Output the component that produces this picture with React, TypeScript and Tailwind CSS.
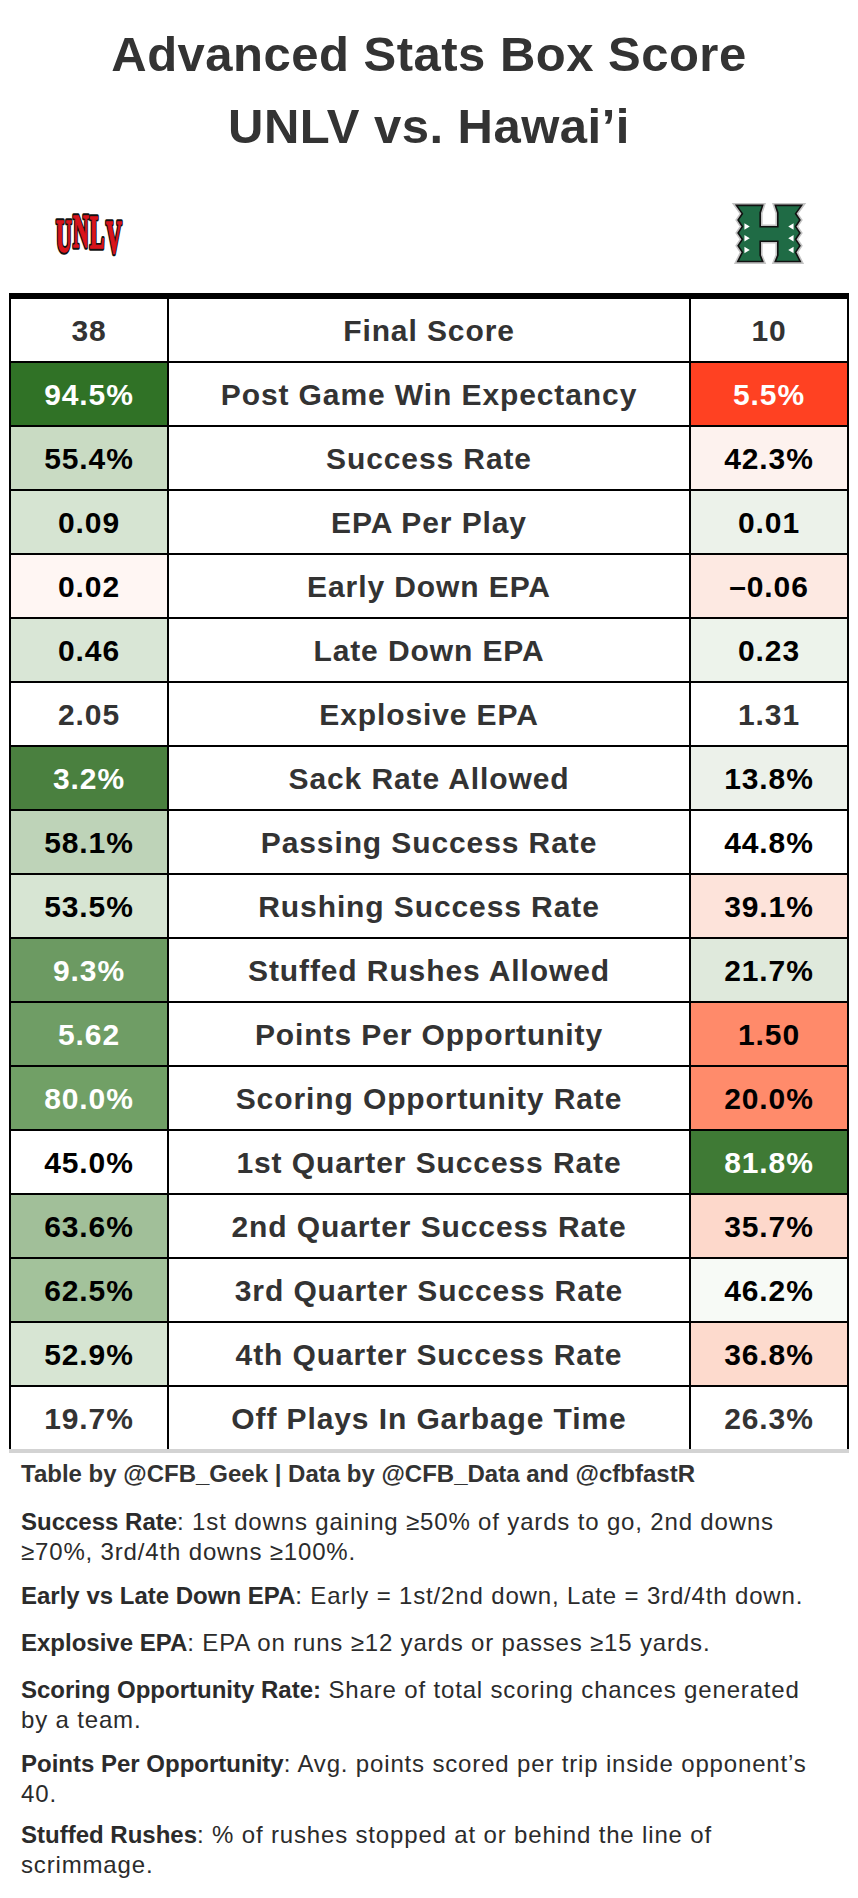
import React from 'react';

type Row = {
  left: string;
  label: string;
  right: string;
  lc: string;
  rc: string;
};

const rows: Row[] = [
  { left: '38', label: 'Final Score', right: '10', lc: 'bg-white text-[#333]', rc: 'bg-white text-[#333]' },
  { left: '94.5%', label: 'Post Game Win Expectancy', right: '5.5%', lc: 'bg-[#307226] text-white', rc: 'bg-[#ff4122] text-white' },
  { left: '55.4%', label: 'Success Rate', right: '42.3%', lc: 'bg-[#c9dbc3] text-black', rc: 'bg-[#fdf2ee] text-black' },
  { left: '0.09', label: 'EPA Per Play', right: '0.01', lc: 'bg-[#d6e4d2] text-black', rc: 'bg-[#ecf2ea] text-black' },
  { left: '0.02', label: 'Early Down EPA', right: '–0.06', lc: 'bg-[#fff6f3] text-black', rc: 'bg-[#fde9e2] text-black' },
  { left: '0.46', label: 'Late Down EPA', right: '0.23', lc: 'bg-[#d9e6d6] text-black', rc: 'bg-[#edf3eb] text-black' },
  { left: '2.05', label: 'Explosive EPA', right: '1.31', lc: 'bg-white text-[#333]', rc: 'bg-white text-[#333]' },
  { left: '3.2%', label: 'Sack Rate Allowed', right: '13.8%', lc: 'bg-[#4a803f] text-white', rc: 'bg-[#ecf1ea] text-black' },
  { left: '58.1%', label: 'Passing Success Rate', right: '44.8%', lc: 'bg-[#bed3b8] text-black', rc: 'bg-white text-black' },
  { left: '53.5%', label: 'Rushing Success Rate', right: '39.1%', lc: 'bg-[#d7e5d3] text-black', rc: 'bg-[#fde3da] text-black' },
  { left: '9.3%', label: 'Stuffed Rushes Allowed', right: '21.7%', lc: 'bg-[#6c9a62] text-white', rc: 'bg-[#dfe9dc] text-black' },
  { left: '5.62', label: 'Points Per Opportunity', right: '1.50', lc: 'bg-[#6f9d65] text-white', rc: 'bg-[#ff8a6a] text-black' },
  { left: '80.0%', label: 'Scoring Opportunity Rate', right: '20.0%', lc: 'bg-[#71a066] text-white', rc: 'bg-[#ff8b6b] text-black' },
  { left: '45.0%', label: '1st Quarter Success Rate', right: '81.8%', lc: 'bg-white text-black', rc: 'bg-[#3f7a35] text-white' },
  { left: '63.6%', label: '2nd Quarter Success Rate', right: '35.7%', lc: 'bg-[#a1bf99] text-black', rc: 'bg-[#fdd8cb] text-black' },
  { left: '62.5%', label: '3rd Quarter Success Rate', right: '46.2%', lc: 'bg-[#a3c29b] text-black', rc: 'bg-[#f7faf6] text-black' },
  { left: '52.9%', label: '4th Quarter Success Rate', right: '36.8%', lc: 'bg-[#d7e5d3] text-black', rc: 'bg-[#fddacd] text-black' },
  { left: '19.7%', label: 'Off Plays In Garbage Time', right: '26.3%', lc: 'bg-white text-[#333]', rc: 'bg-white text-[#333]' },
];

const unlvLetters = [
  { ch: 'U', x: 10, y: 40 },
  { ch: 'N', x: 27, y: 35 },
  { ch: 'L', x: 43, y: 36 },
  { ch: 'V', x: 60, y: 41 },
];

// arched red block letters, black outline
function UnlvLogo() {
  return (
    <svg width="72" height="44" viewBox="0 0 70 44" overflow="visible">
      {unlvLetters.map((l) => (
        <text
          key={'o' + l.ch}
          textAnchor="middle"
          fontFamily="'Liberation Serif', serif"
          fontWeight="bold"
          fontSize="26"
          fill="#111"
          stroke="#111"
          strokeWidth="3"
          strokeLinejoin="round"
          transform={`translate(${l.x} ${l.y}) scale(0.84 1.8)`}
        >
          {l.ch}
        </text>
      ))}
      {unlvLetters.map((l) => (
        <text
          key={'f' + l.ch}
          textAnchor="middle"
          fontFamily="'Liberation Serif', serif"
          fontWeight="bold"
          fontSize="26"
          fill="#d9141c"
          stroke="#d9141c"
          strokeWidth="0.8"
          transform={`translate(${l.x} ${l.y}) scale(0.84 1.8)`}
        >
          {l.ch}
        </text>
      ))}
    </svg>
  );
}

function HawaiiLogo() {
  const d =
    'M9 4 L31 4 L29 10 L29 24 L47 24 L47 10 L45 4 L67 4 L62 11 L66 17 L62 23 L66 29 L62 35 L66 41 L62 47 L66 55 L45 55 L47 50 L47 36 L29 36 L29 50 L31 55 L10 55 L14 47 L10 41 L14 35 L10 29 L14 23 L10 17 L14 11 Z';
  return (
    <svg width="76" height="62" viewBox="4 1 68 58">
      <path d={d} fill="#b9b9b9" stroke="#c4c4c4" strokeWidth="6" strokeLinejoin="miter" />
      <path d={d} fill="#111" stroke="#111" strokeWidth="3" strokeLinejoin="miter" />
      <path d={d} fill="#1f6b45" />
      <path d="M15 20 L20 23 L15 26 Z M15 31 L20 34 L15 37 Z M15 42 L20 45 L15 48 Z" fill="#fff" />
      <path d="M61 20 L56 23 L61 26 Z M61 31 L56 34 L61 37 Z M61 42 L56 45 L61 48 Z" fill="#fff" />
    </svg>
  );
}

export default function App() {
  return (
    <div className="w-[858px] bg-white font-['Liberation_Sans',Arial,sans-serif] text-[#333]">
      <div className="pt-[18px] text-center text-[49px] font-bold leading-[72px] tracking-[0.01em]">
        <div>Advanced Stats Box Score</div>
        <div>UNLV vs. Hawai’i</div>
      </div>

      <div className="flex h-[131px] items-center justify-between pl-[53px] pr-[51px] pt-[12px]">
        <UnlvLogo />
        <HawaiiLogo />
      </div>

      <div className="mx-[9px] border-t-[6px] border-black">
        {rows.map((row, i) => {
          const last = i === rows.length - 1;
          return (
            <div
              key={row.label}
              className={
                last
                  ? 'flex h-[66px] border-b-4 border-[#d3d3d3]'
                  : 'flex h-[64px] border-b-2 border-black'
              }
            >
              <div className={`flex w-[158px] items-center justify-center border-l-2 border-black text-[30px] font-bold tracking-[0.03em] ${row.lc}`}>
                {row.left}
              </div>
              <div className="flex w-[522px] items-center justify-center border-l-2 border-black bg-white text-[30px] font-bold tracking-[0.03em] text-[#333]">
                {row.label}
              </div>
              <div className={`flex w-[160px] items-center justify-center border-x-2 border-black text-[30px] font-bold tracking-[0.03em] ${row.rc}`}>
                {row.right}
              </div>
            </div>
          );
        })}
      </div>

      <div className="px-[21px] pb-[24px] text-[24px] leading-[30px] tracking-[0.035em] text-[#2b2b2b]">
        <p className="mt-[6px] whitespace-nowrap font-bold tracking-normal text-[#333]">
          Table by @CFB_Geek | Data by @CFB_Data and @cfbfastR
        </p>
        <p className="mt-[18px] whitespace-nowrap">
          <span className="font-bold tracking-normal">Success Rate</span>: 1st downs gaining ≥50% of yards to go, 2nd downs
          <br />
          ≥70%, 3rd/4th downs ≥100%.
        </p>
        <p className="mt-[14px] whitespace-nowrap">
          <span className="font-bold tracking-normal">Early vs Late Down EPA</span>: Early = 1st/2nd down, Late = 3rd/4th down.
        </p>
        <p className="mt-[17px] whitespace-nowrap">
          <span className="font-bold tracking-normal">Explosive EPA</span>: EPA on runs ≥12 yards or passes ≥15 yards.
        </p>
        <p className="mt-[17px] whitespace-nowrap">
          <span className="font-bold tracking-normal">Scoring Opportunity Rate:</span> Share of total scoring chances generated
          <br />
          by a team.
        </p>
        <p className="mt-[14px] whitespace-nowrap">
          <span className="font-bold tracking-normal">Points Per Opportunity</span>: Avg. points scored per trip inside opponent’s
          <br />
          40.
        </p>
        <p className="mt-[11px] whitespace-nowrap">
          <span className="font-bold tracking-normal">Stuffed Rushes</span>: % of rushes stopped at or behind the line of
          <br />
          scrimmage.
        </p>
      </div>
    </div>
  );
}
